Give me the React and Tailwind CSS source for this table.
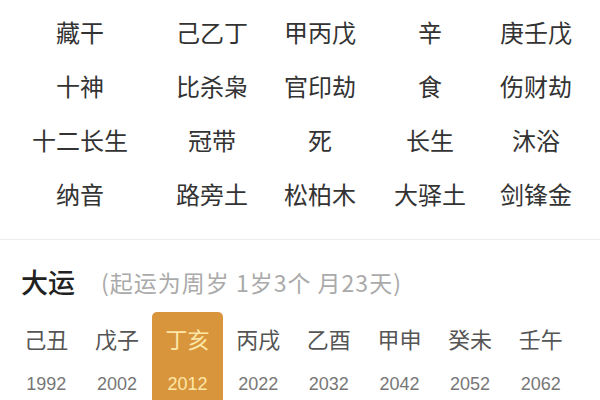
const rows = [
  ["藏干", "己乙丁", "甲丙戊", "辛", "庚壬戊"],
  ["十神", "比杀枭", "官印劫", "食", "伤财劫"],
  ["十二长生", "冠带", "死", "长生", "沐浴"],
  ["纳音", "路旁土", "松柏木", "大驿土", "剑锋金"],
];

const dayun = [
  ["己丑", "1992"],
  ["戊子", "2002"],
  ["丁亥", "2012"],
  ["丙戌", "2022"],
  ["乙酉", "2032"],
  ["甲申", "2042"],
  ["癸未", "2052"],
  ["壬午", "2062"],
];

export default function App() {
  return (
    <div className="w-[600px] h-[400px] overflow-hidden bg-white font-['Noto_Sans_CJK_SC',sans-serif]">
      <div className="pt-[5px] pb-[18px]">
        {rows.map((row, i) => (
          <div
            key={i}
            className="grid grid-cols-[160px_104px_112px_108px_104px] h-[54px] items-center text-[24px] leading-none text-[#333]"
          >
            {row.map((cell, j) => (
              <div key={j} className="text-center whitespace-nowrap">
                {cell}
              </div>
            ))}
          </div>
        ))}
      </div>
      <div className="h-px bg-[#ececec]" />
      <div className="flex items-center pt-[16px] pl-[21px] h-[52px] box-content">
        <span className="text-[27px] leading-[36px] font-medium text-[#222]">大运</span>
        <span className="ml-[26px] text-[23px] leading-[36px] tracking-[1px] text-[#aaa] whitespace-nowrap">
          (起运为周岁 1岁3个 月23天)
        </span>
      </div>
      <div className="grid grid-cols-8 pl-[11px] pr-[24px] mt-[4px]">
        {dayun.map(([gz, year], i) => (
          <div
            key={i}
            className={
              i === 2
                ? "flex flex-col items-center pt-[11px] h-[100px] rounded-t-[5px] bg-[#d8953b] text-[#fde7a8]"
                : "flex flex-col items-center pt-[11px] h-[100px]"
            }
          >
            <span
              className={
                i === 2
                  ? "text-[22px] leading-[30px]"
                  : "text-[22px] leading-[30px] text-[#555]"
              }
            >
              {gz}
            </span>
            <span
              className={
                i === 2
                  ? "mt-[19px] text-[18px] leading-[24px] font-['Liberation_Sans',sans-serif]"
                  : "mt-[19px] text-[18px] leading-[24px] text-[#777] font-['Liberation_Sans',sans-serif]"
              }
            >
              {year}
            </span>
          </div>
        ))}
      </div>
    </div>
  );
}
